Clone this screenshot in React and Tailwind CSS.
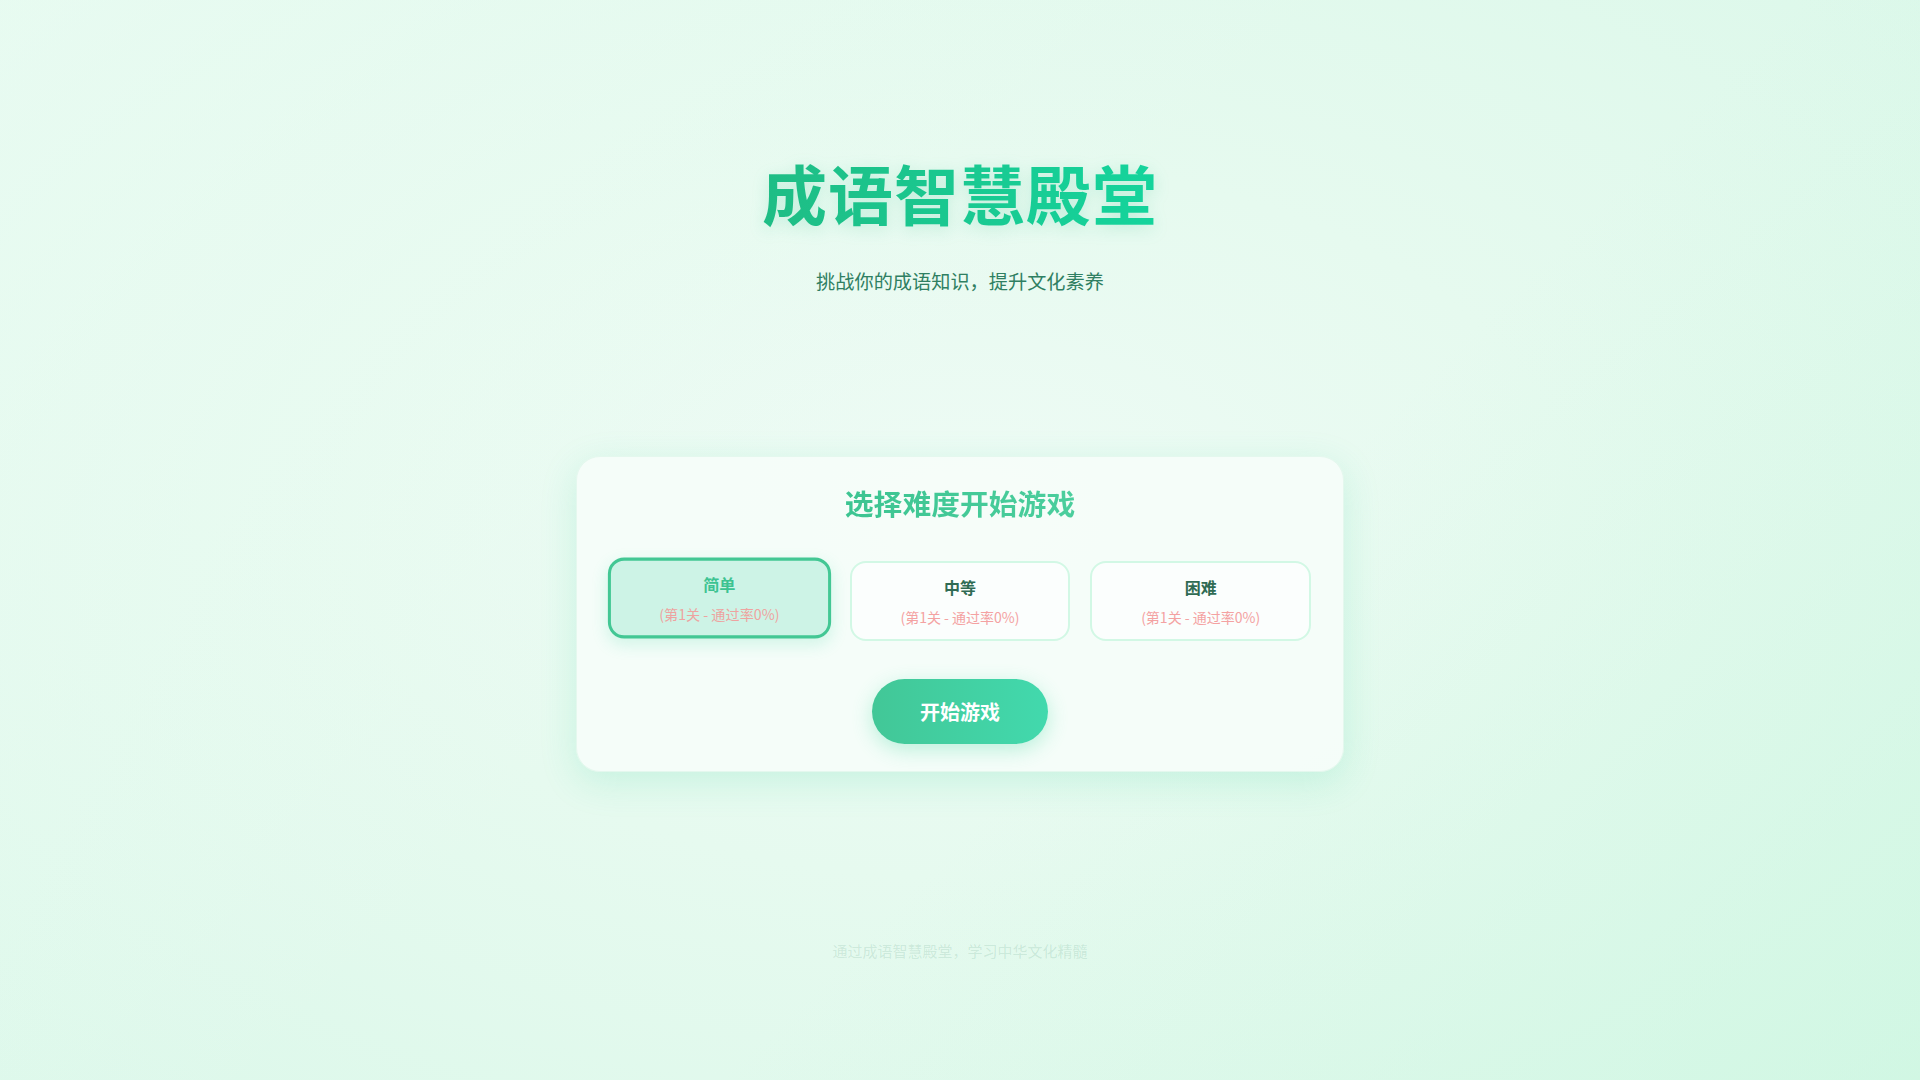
import React from "react";

const levels = [
  { name: "简单", sub: "(第1关 - 通过率0%)", active: true },
  { name: "中等", sub: "(第1关 - 通过率0%)", active: false },
  { name: "困难", sub: "(第1关 - 通过率0%)", active: false },
];

export default function App() {
  return (
    <div
      className="min-h-screen w-full flex flex-col items-center bg-[radial-gradient(ellipse_at_50%_48%,#eefbf5_0%,#e6faef_45%,#dcf8ea_100%)] relative overflow-hidden"
      style={{ fontFamily: '"Noto Sans CJK SC", "Noto Sans", sans-serif' }}
    >
      <div className="absolute inset-0 bg-[linear-gradient(135deg,rgba(240,253,246,0.55)_0%,rgba(240,253,246,0)_45%,rgba(200,246,222,0)_60%,rgba(200,246,222,0.55)_100%)] pointer-events-none" />
      <div className="relative flex flex-col items-center w-full">
        <h1 className="mt-[153px] text-[65px] leading-[1.2] tracking-[1px] font-bold bg-[linear-gradient(90deg,#1fbd85,#14d49c)] bg-clip-text text-transparent drop-shadow-[0_4px_8px_rgba(16,185,129,0.18)]">
          成语智慧殿堂
        </h1>
        <p className="mt-[36px] text-[19.2px] leading-[1.5] text-[#2f7f62]">
          挑战你的成语知识，提升文化素养
        </p>

        <div className="mt-[160px] w-[768px] rounded-3xl border border-[#e4f8ee] bg-[#f6fdf9]/90 shadow-[0_10px_36px_rgba(52,211,153,0.18)] px-8 pt-[27px] pb-[27px] flex flex-col items-center">
          <h2 className="text-[28.8px] leading-[1.3] font-bold bg-[linear-gradient(90deg,#3cc491,#4bce9d)] bg-clip-text text-transparent">
            选择难度开始游戏
          </h2>
          <div className="mt-10 grid grid-cols-3 gap-5 w-full">
            {levels.map((l) =>
              l.active ? (
                <div
                  key={l.name}
                  className="h-[80px] rounded-2xl border-[3px] border-[#43c794] bg-[#cdf3e6] flex flex-col items-center pt-[11px] -translate-y-[3px] scale-[1.01] shadow-[0_6px_16px_rgba(52,211,153,0.18)]"
                >
                  <div className="text-[16px] leading-[24px] font-bold text-[#3cc391]">{l.name}</div>
                  <div className="mt-2 text-[14px] leading-[20px] text-[#eea3a0]">{l.sub}</div>
                </div>
              ) : (
                <div
                  key={l.name}
                  className="h-[80px] rounded-2xl border-2 border-[#d2f8e5] bg-[#fbfefd] flex flex-col items-center pt-3"
                >
                  <div className="text-[16px] leading-[24px] font-bold text-[#2f6b53]">{l.name}</div>
                  <div className="mt-2 text-[14px] leading-[20px] text-[#f4a2a2]">{l.sub}</div>
                </div>
              )
            )}
          </div>
          <button className="mt-[38px] h-[65px] px-12 rounded-full bg-[linear-gradient(90deg,#42c797,#42d9ad)] text-white text-[20px] font-bold shadow-[0_6px_20px_rgba(52,211,153,0.3)]">
            开始游戏
          </button>
        </div>

        <p className="mt-[168px] text-[15px] leading-[1.5] text-[#2f7f62]/15">
          通过成语智慧殿堂，学习中华文化精髓
        </p>
      </div>
    </div>
  );
}
